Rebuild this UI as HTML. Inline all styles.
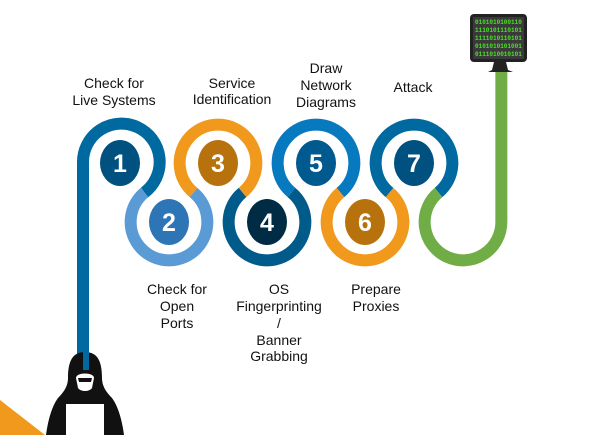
<!DOCTYPE html>
<html><head><style>
html,body{margin:0;padding:0;background:#fff;width:609px;height:435px;overflow:hidden}
svg{display:block}
text{font-family:"Liberation Sans","DejaVu Sans",sans-serif;font-size:14px;fill:#111}
.n{font-size:25px;font-weight:bold;fill:#fff;text-anchor:middle}
.m{font-family:"Liberation Mono",monospace;font-size:6px;fill:#4ee02a;font-weight:bold}
</style></head><body>
<svg width="609" height="435" viewBox="0 0 609 435">
<polygon points="0,400 45,435 0,435" fill="#f0991c"/>
<g fill="none" stroke-width="12">
<path d="M83 370 L83 163 A38.35 38.35 0 1 1 144.5 192.5" stroke="#0069a0"/>
<path d="M144.5 192.5 A38.35 38.35 0 1 0 193.5 192.5" stroke="#5b9bd5"/>
<path d="M193.5 192.5 A38.35 38.35 0 1 1 242.5 192.5" stroke="#f0991c"/>
<path d="M242.5 192.5 A38.35 38.35 0 1 0 291.5 192.5" stroke="#005a8a"/>
<path d="M291.5 192.5 A38.35 38.35 0 1 1 340.5 192.5" stroke="#0779be"/>
<path d="M340.5 192.5 A38.35 38.35 0 1 0 389.5 192.5" stroke="#f0991c"/>
<path d="M389.5 192.5 A38.35 38.35 0 1 1 438.5 192.5" stroke="#006aa0"/>
<path d="M438.5 192.5 A38.35 38.35 0 1 0 501.35 222 L501.35 72" stroke="#70ad47"/>
</g>
<ellipse cx="120" cy="163" rx="20" ry="23" fill="#005080"/>
<ellipse cx="169" cy="222" rx="20" ry="23" fill="#2e75b6"/>
<ellipse cx="218" cy="163" rx="20" ry="23" fill="#b8720d"/>
<ellipse cx="267" cy="222" rx="20" ry="23" fill="#002b45"/>
<ellipse cx="316" cy="163" rx="20" ry="23" fill="#005a90"/>
<ellipse cx="365" cy="222" rx="20" ry="23" fill="#b8720d"/>
<ellipse cx="414" cy="163" rx="20" ry="23" fill="#005080"/>
<text class="n" x="120" y="172">1</text>
<text class="n" x="169" y="231">2</text>
<text class="n" x="218" y="172">3</text>
<text class="n" x="267" y="231">4</text>
<text class="n" x="316" y="172">5</text>
<text class="n" x="365" y="231">6</text>
<text class="n" x="414" y="172">7</text>
<g text-anchor="middle">
<text x="114" y="88">Check for</text><text x="114" y="105">Live Systems</text>
<text x="232" y="88">Service</text><text x="232" y="104">Identification</text>
<text x="326" y="73">Draw</text><text x="326" y="90">Network</text><text x="326" y="107">Diagrams</text>
<text x="413" y="92">Attack</text>
<text x="177" y="294">Check for</text><text x="177" y="311">Open</text><text x="177" y="328">Ports</text>
<text x="279" y="294">OS</text><text x="279" y="311">Fingerprinting</text><text x="279" y="328">/</text><text x="279" y="345">Banner</text><text x="279" y="361">Grabbing</text>
<text x="376" y="294">Prepare</text><text x="376" y="311">Proxies</text>
</g>
<rect x="470" y="14" width="57" height="48" rx="4" fill="#222"/>
<rect x="473" y="17" width="51" height="42" fill="#3a3a3a"/>
<polygon points="494,62 506,62 508,70 513,72 488,72 492,70" fill="#222"/>
<text class="m" x="475" y="24">0101010100110</text>
<text class="m" x="475" y="32">1110101110101</text>
<text class="m" x="475" y="40">1111010110101</text>
<text class="m" x="475" y="48">0101010101001</text>
<text class="m" x="475" y="56">0111010010101</text>
<path d="M85 352 C72 352 68 362 68 378 C68 386 64 392 58 398 C52 406 48 420 46 435 L124 435 C122 420 118 406 112 398 C106 392 102 386 102 378 C102 362 98 352 85 352 Z" fill="#111"/>
<rect x="83" y="352" width="6" height="18" fill="#0069a0"/>
<path d="M76 378 C76 372 94 372 94 378 L92 388 C89 392 81 392 78 388 Z" fill="#fff"/>
<path d="M78 378 L92 378 L91 382 L79 382 Z" fill="#111"/>
<rect x="66" y="404" width="38" height="31" fill="#fff"/>
</svg>
</body></html>
